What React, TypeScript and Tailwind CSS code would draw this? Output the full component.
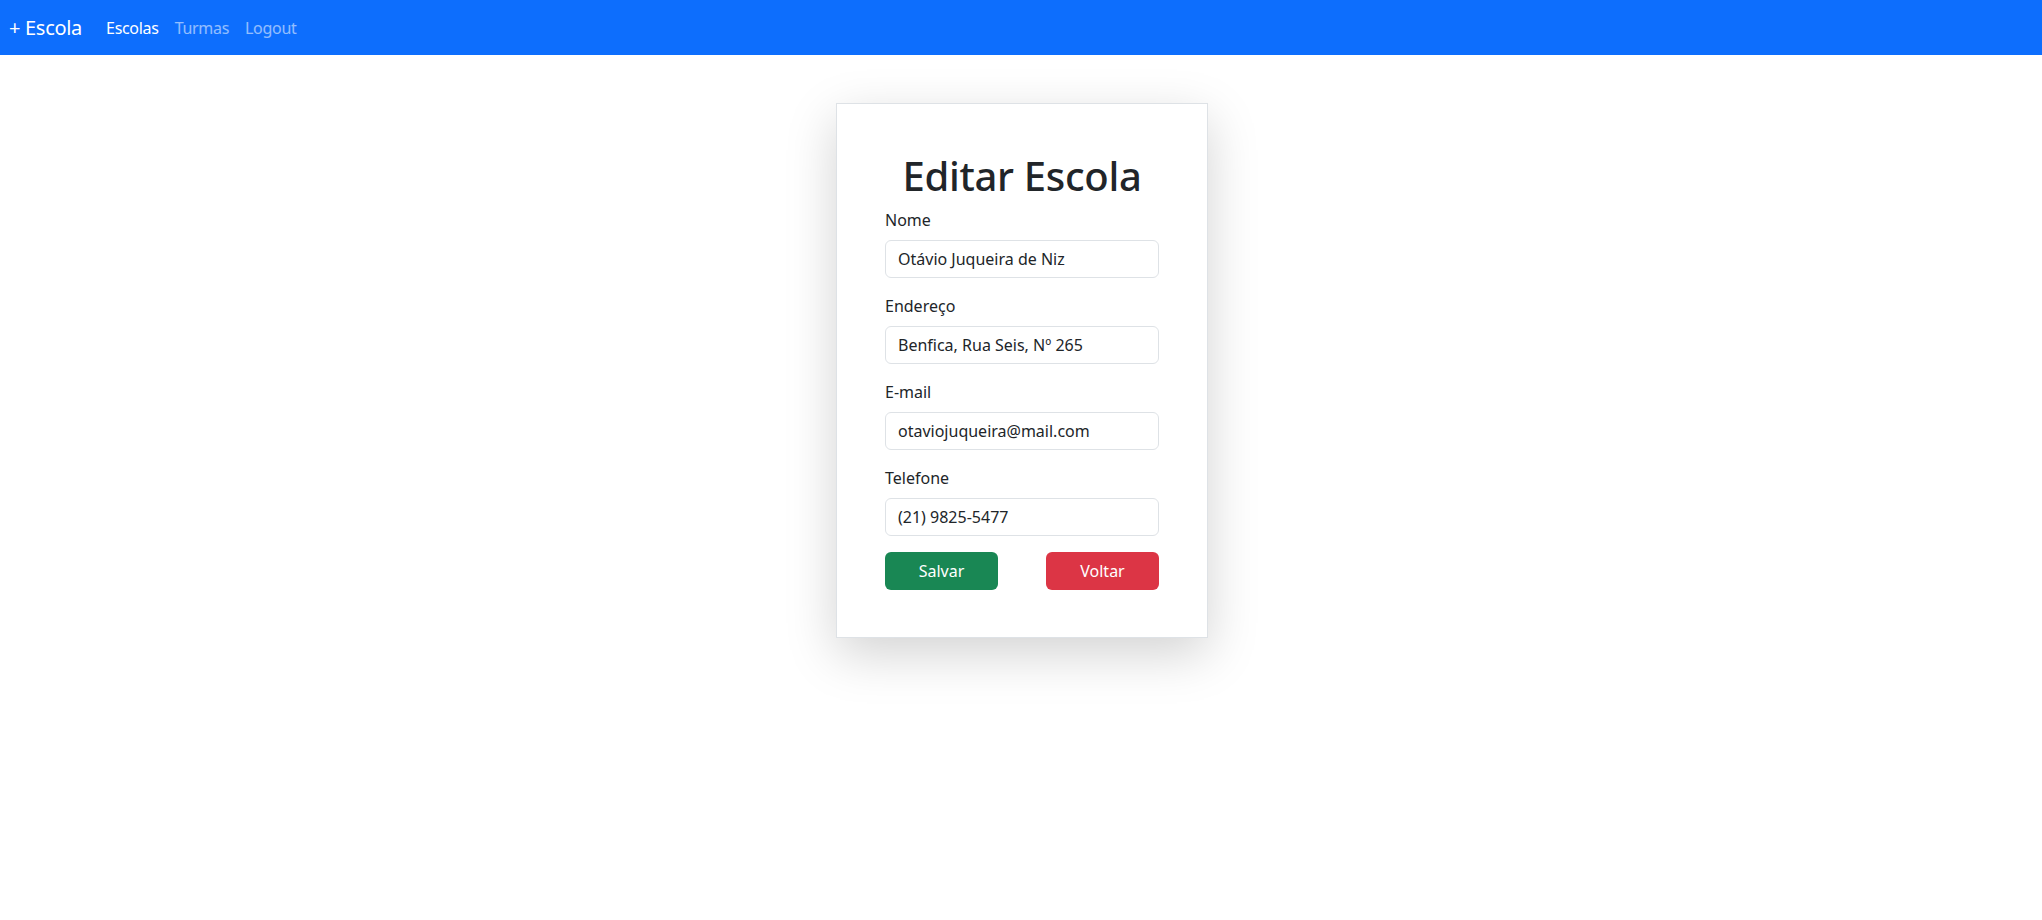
import { useState } from 'react';

const fields = [
  { id: 'nome', label: 'Nome', value: 'Otávio Juqueira de Niz' },
  { id: 'endereco', label: 'Endereço', value: 'Benfica, Rua Seis, Nº 265' },
  { id: 'email', label: 'E-mail', value: 'otaviojuqueira@mail.com' },
  { id: 'telefone', label: 'Telefone', value: '(21) 9825-5477' },
];

export default function App() {
  const [values, setValues] = useState<Record<string, string>>(
    Object.fromEntries(fields.map(f => [f.id, f.value]))
  );

  return (
    <div className="min-h-screen bg-white text-[#212529] font-['Noto_Sans',sans-serif]">
      <nav className="h-[55px] bg-[#0d6efd] flex items-center pl-[9px] pr-2 tracking-[-0.3px]">
        <span className="text-[20px] text-white mr-4 leading-[30px]">+ Escola</span>
        <div className="flex items-center text-[16px]">
          <a className="px-2 text-white">Escolas</a>
          <a className="px-2 text-white/55">Turmas</a>
          <a className="px-2 text-white/55">Logout</a>
        </div>
      </nav>

      <div className="flex justify-center pt-12 pl-[2px]">
        <div className="w-[372px] bg-white border border-[#dee2e6] px-12 pt-12 pb-[47px] shadow-[0_16px_48px_rgba(0,0,0,0.175)]">
          <h1 className="text-[40px] leading-[48px] font-medium text-center mb-2 tracking-[-0.3px]">Editar Escola</h1>
          {fields.map(f => (
            <div key={f.id} className="mb-4">
              <label className="block text-[16px] leading-6 mb-2">{f.label}</label>
              <input
                className="w-full h-[38px] border border-[#dee2e6] rounded-[6px] px-3 text-[16px] text-[#212529] outline-none"
                value={values[f.id]}
                onChange={e => setValues(prev => ({ ...prev, [f.id]: e.target.value }))}
              />
            </div>
          ))}
          <div className="flex justify-between">
            <button className="w-[113px] h-[38px] rounded-[6px] bg-[#198754] text-white text-[16px]">Salvar</button>
            <button className="w-[113px] h-[38px] rounded-[6px] bg-[#dc3545] text-white text-[16px]">Voltar</button>
          </div>
        </div>
      </div>
    </div>
  );
}
